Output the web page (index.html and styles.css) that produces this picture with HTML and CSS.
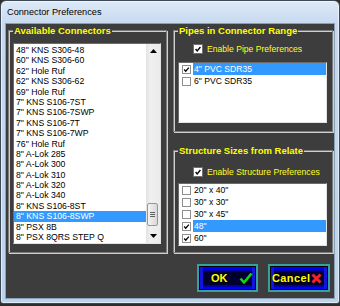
FILE: index.html
```html
<!DOCTYPE HTML>
<html>
    <head>
        <meta charset="UTF-8">
        <title>Connector Preferences</title>
        <link rel="stylesheet" href="styles.css">
    </head>
    <body>
        <div class="janela">
            <div class="titulo">Connector Preferences</div>
            <div class="conteudo">
                <fieldset class="grupo conectores">
                    <legend>Available Connectors</legend>
                    <div class="lista">
                        <ul class="itens">
                            <li>48&quot; KNS S306-48</li>
                            <li>60&quot; KNS S306-60</li>
                            <li>62&quot; Hole Ruf</li>
                            <li>62&quot; KNS S306-62</li>
                            <li>69&quot; Hole Ruf</li>
                            <li>7&quot; KNS S106-7ST</li>
                            <li>7&quot; KNS S106-7SWP</li>
                            <li>7&quot; KNS S106-7T</li>
                            <li>7&quot; KNS S106-7WP</li>
                            <li>76&quot; Hole Ruf</li>
                            <li>8&quot; A-Lok 285</li>
                            <li>8&quot; A-Lok 300</li>
                            <li>8&quot; A-Lok 310</li>
                            <li>8&quot; A-Lok 320</li>
                            <li>8&quot; A-Lok 340</li>
                            <li>8&quot; KNS S106-8ST</li>
                            <li class="sel">8&quot; KNS S106-8SWP</li>
                            <li>8&quot; PSX 8B</li>
                            <li>8&quot; PSX 8QRS STEP Q</li>
                        </ul>
                        <div class="rolagem">
                            <div class="seta"><svg width="7" height="4" viewBox="0 0 7 4"><path d="M0 4 L3.5 0 L7 4 Z" fill="#000"/></svg></div>
                            <div class="trilho"><div class="barra"><i></i><i></i><i></i></div></div>
                            <div class="seta"><svg width="7" height="4" viewBox="0 0 7 4"><path d="M0 0 L7 0 L3.5 4 Z" fill="#000"/></svg></div>
                        </div>
                    </div>
                </fieldset>

                <div class="lado">
                    <fieldset class="grupo canos">
                        <legend>Pipes in Connector Range</legend>
                        <label class="ativar"><span class="caixa grande"><svg viewBox="0 0 10 10"><path d="M2 5 L4 7.3 L8 2.5" fill="none" stroke="#000" stroke-width="1.7"/></svg></span>Enable Pipe Preferences</label>
                        <ul class="marcados">
                            <li class="sel"><span class="caixa"><svg viewBox="0 0 9 9"><path d="M1.5 4.5 L3.5 6.7 L7.5 2" fill="none" stroke="#000" stroke-width="1.6"/></svg></span><span class="texto">4&quot; PVC SDR35</span></li>
                            <li><span class="caixa"></span><span class="texto">6&quot; PVC SDR35</span></li>
                        </ul>
                    </fieldset>

                    <fieldset class="grupo estruturas">
                        <legend>Structure Sizes from Relate</legend>
                        <label class="ativar"><span class="caixa grande"><svg viewBox="0 0 10 10"><path d="M2 5 L4 7.3 L8 2.5" fill="none" stroke="#000" stroke-width="1.7"/></svg></span>Enable Structure Preferences</label>
                        <ul class="marcados">
                            <li><span class="caixa"></span><span class="texto">20&quot; x 40&quot;</span></li>
                            <li><span class="caixa"></span><span class="texto">30&quot; x 30&quot;</span></li>
                            <li><span class="caixa"></span><span class="texto">30&quot; x 45&quot;</span></li>
                            <li class="sel"><span class="caixa"><svg viewBox="0 0 9 9"><path d="M1.5 4.5 L3.5 6.7 L7.5 2" fill="none" stroke="#000" stroke-width="1.6"/></svg></span><span class="texto">48&quot;</span></li>
                            <li><span class="caixa"><svg viewBox="0 0 9 9"><path d="M1.5 4.5 L3.5 6.7 L7.5 2" fill="none" stroke="#000" stroke-width="1.6"/></svg></span><span class="texto">60&quot;</span></li>
                        </ul>
                    </fieldset>

                    <div class="botoes">
                        <button class="botao ok"><span>OK</span><svg width="14" height="12" viewBox="0 0 14 12"><path d="M1.5 6.5 L5 10.5 L12.5 1.5" fill="none" stroke="#14d414" stroke-width="2.6" stroke-linejoin="round"/></svg></button>
                        <button class="botao cancelar"><span>Cancel</span><svg width="11" height="11" viewBox="0 0 11 11"><path d="M1.5 1.5 L9.5 9.5 M9.5 1.5 L1.5 9.5" fill="none" stroke="#ff1e1e" stroke-width="3"/></svg></button>
                    </div>
                </div>
            </div>
        </div>
    </body>
</html>
```

FILE: styles.css
```css
body{
    margin: 0;
    background: #2e2e2e;
    font-family: "Liberation Sans", Arial, sans-serif;
}
.janela{
    width: 340px;
    height: 304px;
    box-sizing: border-box;
    border: 1px solid #3e4957;
    border-radius: 6px 6px 3px 3px;
    background: linear-gradient(#dde9f7, #c6d9ef 24px, #bdd3ec);
    box-shadow: inset 0 0 0 1px rgba(255, 255, 255, 0.55);
    padding: 0 4px 4px;
    display: flex;
    flex-direction: column;
}
.titulo{
    height: 22px;
    line-height: 22px;
    padding-left: 2px;
    font-size: 9.2px;
    color: #000;
}
.conteudo{
    flex: 1;
    border: 1px solid #8aa0b9;
    background: #3d3d3d;
    padding: 1px 1px 0 2px;
    display: grid;
    grid-template-columns: 159px 160px;
    column-gap: 6px;
    align-items: start;
}
.grupo{
    margin: 0;
    padding: 0 5px 0 4px;
    border: 1px solid #7c7c7c;
    box-shadow: inset 1px 1px 0 #cfcfcf, 1px 1px 0 #cfcfcf;
    box-sizing: border-box;
    min-width: 0;
}
.grupo legend{
    padding: 0 1px;
    color: #ffff00;
    font-weight: bold;
    font-size: 9.5px;
    line-height: 11px;
    background: #3d3d3d;
}
.conectores{
    height: 228px;
}
.lista{
    margin-top: 7px;
    height: 201px;
    box-sizing: border-box;
    display: flex;
    border: 1px solid;
    border-color: #6b6b6b #e3e3e3 #e3e3e3 #6b6b6b;
    background: #fff;
}
.itens{
    flex: 1;
    list-style: none;
    margin: 0;
    padding: 1px 0 0;
    font-size: 8.7px;
    color: #000;
}
.itens li{
    height: 10.4px;
    line-height: 10.4px;
    padding-left: 2px;
    white-space: nowrap;
}
.itens li.sel, .marcados li.sel .texto{
    background: #3399ff;
    color: #fff;
}
.rolagem{
    width: 14px;
    display: flex;
    flex-direction: column;
    background: linear-gradient(90deg, #e2e2e2, #f0f0f0 30%, #ebebeb);
}
.seta{
    height: 14px;
    display: flex;
    align-items: center;
    justify-content: center;
}
.trilho{
    flex: 1;
}
.barra{
    margin: 145px 2px 0 1px;
    height: 23px;
    box-sizing: border-box;
    border: 1px solid #979797;
    border-radius: 2px;
    background: linear-gradient(90deg, #f4f4f4, #e6e6e6 50%, #d8d8d8);
    display: flex;
    flex-direction: column;
    align-items: center;
    justify-content: center;
    gap: 1px;
}
.barra i{
    width: 5px;
    height: 1px;
    background: #5f5f5f;
}
.lado{
    display: flex;
    flex-direction: column;
}
.canos{
    height: 107px;
}
.estruturas{
    margin-top: 13px;
    height: 108px;
}
.ativar{
    display: flex;
    align-items: center;
    gap: 4px;
    height: 10px;
    margin: 8px 0 0 15px;
    color: #ffff20;
    font-size: 8.6px;
    white-space: nowrap;
}
.estruturas .ativar{
    margin-top: 11px;
}
.caixa{
    width: 9px;
    height: 9px;
    box-sizing: border-box;
    border: 1px solid #8e8f8f;
    background: #fff;
    display: block;
    flex: none;
}
.caixa svg{
    display: block;
    width: 100%;
    height: 100%;
}
.caixa.grande{
    width: 10px;
    height: 10px;
    border-color: #707070;
}
.marcados{
    list-style: none;
    margin: 8px 0 0;
    padding: 0;
    height: 61px;
    box-sizing: border-box;
    border: 1px solid;
    border-color: #6b6b6b #e3e3e3 #e3e3e3 #6b6b6b;
    background: #fff;
    font-size: 8.6px;
}
.estruturas .marcados{
    margin-top: 6px;
    height: 63px;
}
.marcados li{
    display: flex;
    align-items: center;
    height: 12px;
}
.marcados .caixa{
    margin: 0 2px 0 3px;
}
.texto{
    flex: 1;
    line-height: 12px;
    padding-left: 1px;
    white-space: nowrap;
}
.botoes{
    margin-top: 11px;
    padding-right: 3px;
    display: flex;
    justify-content: flex-end;
    gap: 10px;
}
.botao{
    height: 28px;
    box-sizing: border-box;
    margin: 0;
    border: 2px solid #35a0a0;
    display: flex;
    align-items: center;
    font-family: "Liberation Sans", Arial, sans-serif;
    font-weight: bold;
    font-size: 11px;
    color: #ffff00;
    background: linear-gradient(#0000ff 0 3px, #0000a8 3px 5px, #00002e 5px calc(100% - 5px), #0000a8 calc(100% - 5px) calc(100% - 3px), #0000ff calc(100% - 3px));
    box-shadow: inset 0 0 0 1px #000, inset 3px 0 0 1px #1414e0, inset -3px 0 0 1px #1414e0;
    cursor: pointer;
}
.botao span{
    text-shadow: 1px 1px 0 #000;
}
.ok{
    width: 61px;
    padding: 0 3px 0 12px;
}
.ok svg{
    margin-left: auto;
}
.cancelar{
    width: 62px;
    padding: 0 4px 0 2px;
    letter-spacing: 0.4px;
}
.cancelar svg{
    margin-left: 1px;
}
```
